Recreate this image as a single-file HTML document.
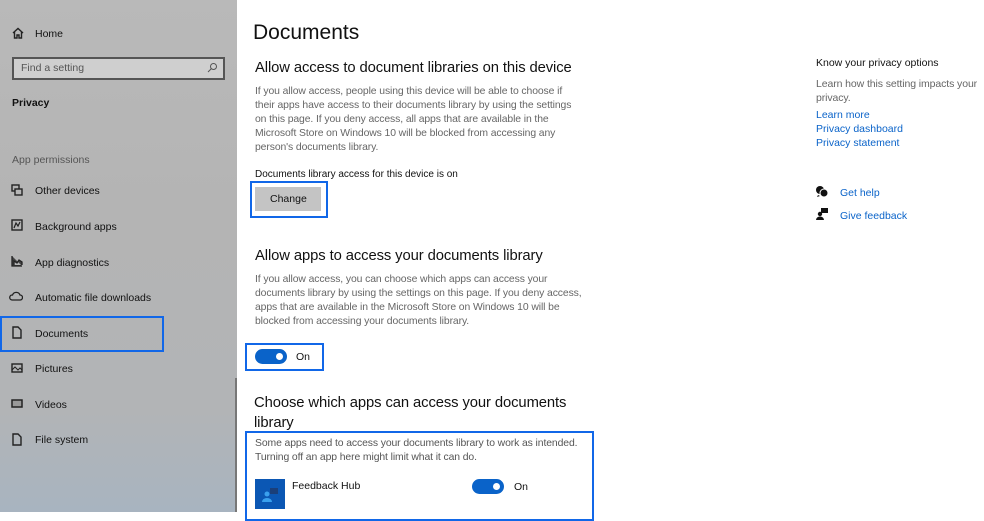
<!DOCTYPE html>
<html><head><meta charset="utf-8"><style>
*{margin:0;padding:0;box-sizing:border-box}
body{width:984px;height:512px;overflow:hidden;background:#fff;font-family:"Liberation Sans",sans-serif;position:relative;color:#000}
.sb{position:absolute;left:0;top:0;width:237px;height:512px;background:linear-gradient(180deg,#b9b9b9 0%,#b4b4b4 40%,#b2b4b6 80%,#a8b4c0 100%)}
.a{position:absolute;white-space:nowrap}
.s{font-size:10.5px;color:#111}
.g{font-size:10.4px;color:#666;letter-spacing:-0.1px}
.h{font-size:14.8px;color:#111;letter-spacing:-0.1px}
.l{font-size:10.5px;color:#0a63c9}
.box{position:absolute;border:2px solid #1167e8}
.tog{position:absolute;width:32px;height:15px;border-radius:8px;background:#0a63c9}
.tog::after{content:"";position:absolute;right:4px;top:4px;width:7px;height:7px;border-radius:50%;background:#fff}
svg{position:absolute}
</style></head><body>
<div class="sb"></div>
<div style="position:absolute;left:235px;top:378px;width:2px;height:134px;background:#777"></div>
<svg style="left:12px;top:27px" width="12" height="12" viewBox="0 0 12 12"><path d="M1 6L6 1.5 11 6M2.5 5v6h2.5V8h2v3h2.5V5" fill="none" stroke="#222" stroke-width="1.4"/></svg>
<div class="a s" style="left:35px;top:28px">Home</div>
<div style="position:absolute;left:12px;top:57px;width:213px;height:23px;border:2px solid #555;background:#cfcfcf"></div>
<div class="a" style="left:21px;top:62px;font-size:10.5px;color:#555">Find a setting</div>
<svg style="left:207px;top:62px" width="11" height="11" viewBox="0 0 11 11"><circle cx="6.5" cy="4.5" r="3" fill="none" stroke="#555"/><path d="M4.5 6.5L1 10" stroke="#555"/></svg>
<div class="a" style="left:12px;top:97px;font-size:10.5px;font-weight:bold;color:#111">Privacy</div>
<div class="a" style="left:12px;top:154px;font-size:10.5px;color:#555">App permissions</div>

<svg style="left:11px;top:184px" width="12" height="12" viewBox="0 0 12 12"><rect x="1" y="1" width="7" height="6" fill="none" stroke="#222" stroke-width="1.4"/><rect x="4" y="5" width="7" height="6" fill="#b6b6b6" stroke="#222" stroke-width="1.4"/></svg>
<div class="a s" style="left:35px;top:185px">Other devices</div>
<svg style="left:11px;top:219px" width="12" height="12" viewBox="0 0 12 12"><rect x="1" y="1" width="10" height="10" fill="none" stroke="#222" stroke-width="1.4"/><path d="M3 9L5 4 7 7 9 3" fill="none" stroke="#222" stroke-width="1.2"/></svg>
<div class="a s" style="left:35px;top:221px">Background apps</div>
<svg style="left:11px;top:255px" width="12" height="12" viewBox="0 0 12 12"><path d="M1 1v10h10M3 10V6l3 2 2-3 3 2v3" fill="#444" stroke="#222" stroke-width="1.3"/></svg>
<div class="a s" style="left:35px;top:257px">App diagnostics</div>
<svg style="left:9px;top:291px" width="14" height="10" viewBox="0 0 14 10"><path d="M3 9h8a2.5 2.5 0 0 0 0-5 4 4 0 0 0-7.5 0A2.5 2.5 0 0 0 3 9z" fill="none" stroke="#222" stroke-width="1.3"/></svg>
<div class="a s" style="left:35px;top:292px">Automatic file downloads</div>
<div class="box" style="left:0;top:316px;width:164px;height:36px"></div>
<svg style="left:11px;top:326px" width="12" height="13" viewBox="0 0 12 13"><path d="M2 1h5l3 3v8H2z" fill="none" stroke="#222" stroke-width="1.4"/></svg>
<div class="a s" style="left:35px;top:328px">Documents</div>
<svg style="left:11px;top:362px" width="12" height="12" viewBox="0 0 12 12"><rect x="1" y="2" width="10" height="8" fill="none" stroke="#222" stroke-width="1.4"/><path d="M1 8l3-3 3 3 2-2 2 2" fill="none" stroke="#222"/></svg>
<div class="a s" style="left:35px;top:363px">Pictures</div>
<svg style="left:11px;top:398px" width="12" height="12" viewBox="0 0 12 12"><rect x="1" y="2" width="10" height="7" fill="#999" stroke="#222" stroke-width="1.5"/></svg>
<div class="a s" style="left:35px;top:399px">Videos</div>
<svg style="left:11px;top:433px" width="12" height="13" viewBox="0 0 12 13"><path d="M2 1h5l3 3v8H2z" fill="none" stroke="#222" stroke-width="1.4"/></svg>
<div class="a s" style="left:35px;top:434px">File system</div>

<div class="a" style="left:253px;top:21px;font-size:21px;color:#111">Documents</div>
<div class="a h" style="left:255px;top:60px">Allow access to document libraries on this device</div>
<div class="a g" style="left:255px;top:85px;line-height:14px">If you allow access, people using this device will be able to choose if<br>their apps have access to their documents library by using the settings<br>on this page. If you deny access, all apps that are available in the<br>Microsoft Store on Windows 10 will be blocked from accessing any<br>person's documents library.</div>
<div class="a s" style="left:255px;top:169px;font-size:10px">Documents library access for this device is on</div>
<div class="box" style="left:250px;top:181px;width:78px;height:37px"></div>
<div style="position:absolute;left:255px;top:187px;width:66px;height:24px;background:#c4c4c4"></div>
<div class="a s" style="left:270px;top:193px">Change</div>

<div class="a h" style="left:255px;top:248px">Allow apps to access your documents library</div>
<div class="a g" style="left:255px;top:273px;line-height:14px">If you allow access, you can choose which apps can access your<br>documents library by using the settings on this page. If you deny access,<br>apps that are available in the Microsoft Store on Windows 10 will be<br>blocked from accessing your documents library.</div>
<div class="box" style="left:245px;top:343px;width:79px;height:28px"></div>
<div class="tog" style="left:255px;top:349px"></div>
<div class="a s" style="left:296px;top:351px">On</div>

<div class="a h" style="left:254px;top:393px;line-height:20px">Choose which apps can access your documents<br>library</div>
<div class="box" style="left:245px;top:431px;width:349px;height:90px"></div>
<div class="a g" style="left:255px;top:437px;line-height:14px;color:#555">Some apps need to access your documents library to work as intended.<br>Turning off an app here might limit what it can do.</div>
<div style="position:absolute;left:255px;top:479px;width:30px;height:30px;background:#0b57b4"></div>
<svg style="left:259px;top:483px" width="22" height="22" viewBox="0 0 22 22"><circle cx="8" cy="11" r="2.5" fill="#3aa0ee"/><path d="M3 19a5 4 0 0 1 10 0z" fill="#3aa0ee"/><rect x="11" y="5" width="8" height="6" fill="#1a3f7a"/></svg>
<div class="a s" style="left:292px;top:480px">Feedback Hub</div>
<div class="tog" style="left:472px;top:479px"></div>
<div class="a s" style="left:514px;top:481px">On</div>

<div class="a s" style="left:816px;top:57px">Know your privacy options</div>
<div class="a g" style="left:816px;top:77px;line-height:14px;font-size:10.5px">Learn how this setting impacts your<br>privacy.</div>
<div class="a l" style="left:816px;top:109px">Learn more</div>
<div class="a l" style="left:816px;top:123px">Privacy dashboard</div>
<div class="a l" style="left:816px;top:137px">Privacy statement</div>
<svg style="left:815px;top:185px" width="14" height="13" viewBox="0 0 14 13"><circle cx="5" cy="5" r="4" fill="#111"/><circle cx="9" cy="8" r="4" fill="#111" stroke="#fff"/><path d="M3 10l-1 2 3-1" fill="#111"/></svg>
<div class="a l" style="left:840px;top:187px">Get help</div>
<svg style="left:816px;top:208px" width="12" height="13" viewBox="0 0 12 13"><rect x="5" y="0" width="7" height="5" fill="#111"/><circle cx="4" cy="6" r="2.2" fill="#111"/><path d="M0 12a4 3.5 0 0 1 8 0z" fill="#111"/></svg>
<div class="a l" style="left:840px;top:210px">Give feedback</div>
</body></html>
